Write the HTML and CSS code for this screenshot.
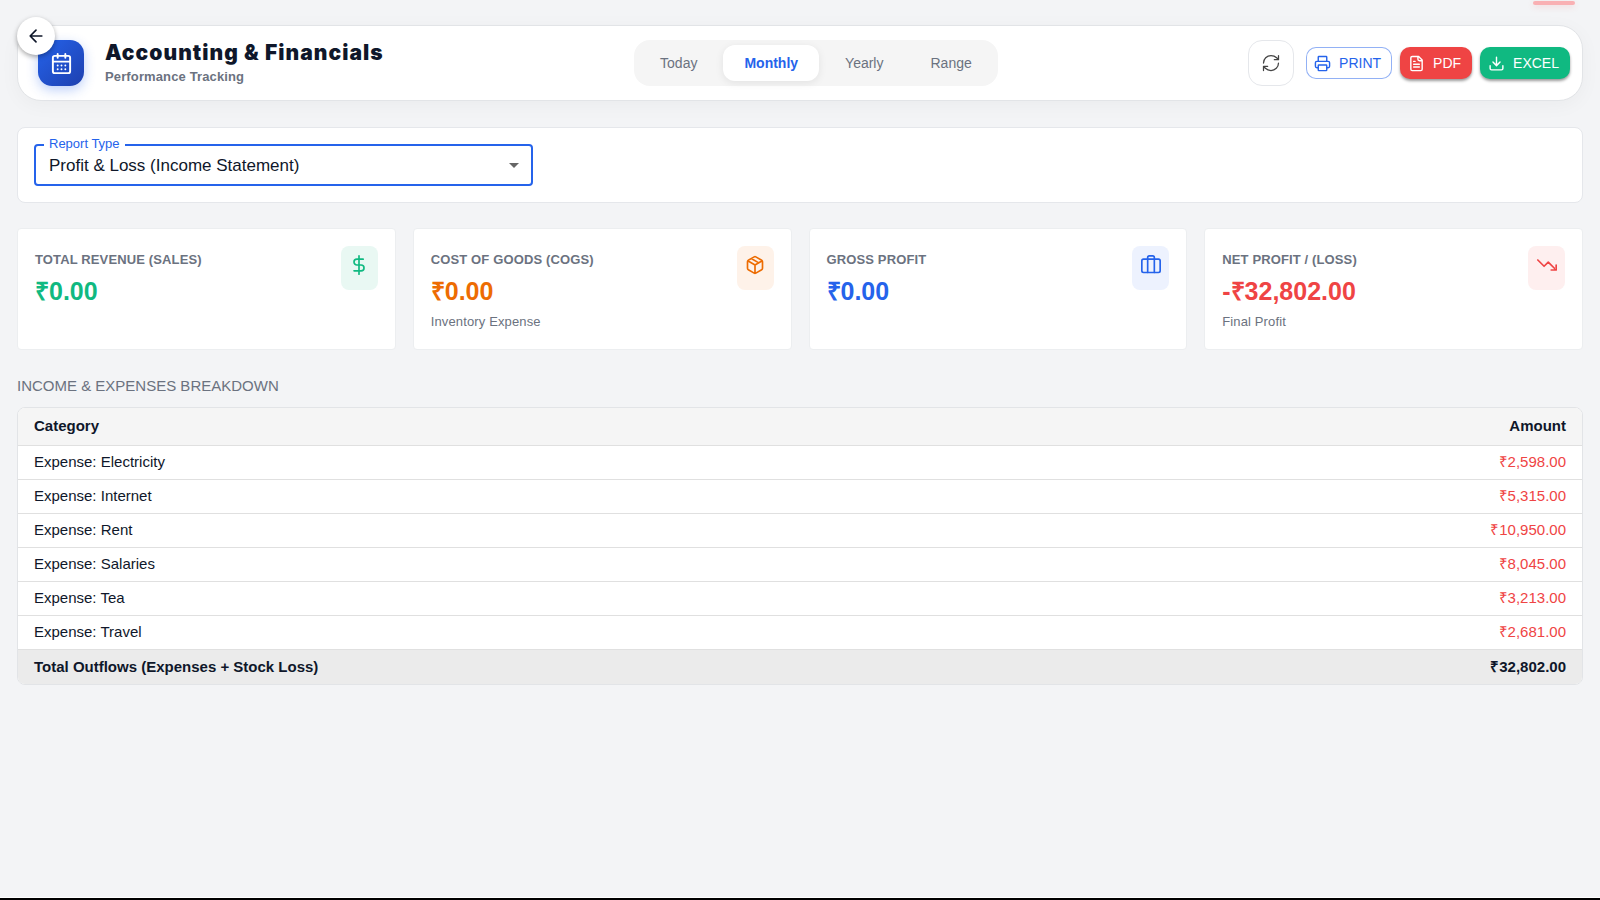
FILE: index.html
```html
<!DOCTYPE html>
<html lang="en">
  <head>
    <meta charset="UTF-8">
    <meta name="viewport" content="width=device-width, initial-scale=1">
    <title>Accounting &amp; Financials</title>
    <link rel="stylesheet" href="styles.css">
  </head>
  <body>
    <div class="toast-bar"></div>
    <button type="button" class="back" aria-label="Back">
      <svg class="icon" width="20" height="20" viewBox="0 0 24 24"><path d="M12 19l-7-7 7-7M19 12H5"/></svg>
    </button>

    <main class="page">
      <header class="header">
        <div class="brand">
          <div class="brand-icon">
            <svg class="icon" width="23" height="23" viewBox="0 0 24 24">
              <rect x="3" y="4" width="18" height="18" rx="2"/>
              <path d="M8 2v4M16 2v4M3 10h18M8 14h.01M12 14h.01M16 14h.01M8 18h.01M12 18h.01M16 18h.01"/>
            </svg>
          </div>
          <div>
            <h1 class="title">Accounting &amp; Financials</h1>
            <p class="subtitle">Performance Tracking</p>
          </div>
        </div>

        <div class="tabs">
          <button type="button" class="tab">Today</button>
          <button type="button" class="tab on">Monthly</button>
          <button type="button" class="tab">Yearly</button>
          <button type="button" class="tab">Range</button>
        </div>

        <div class="actions">
          <button type="button" class="refresh" aria-label="Refresh">
            <svg class="icon" width="20" height="20" viewBox="0 0 24 24"><path d="M3 12a9 9 0 0 1 9-9 9.75 9.75 0 0 1 6.74 2.74L21 8M21 3v5h-5M21 12a9 9 0 0 1-9 9 9.75 9.75 0 0 1-6.74-2.74L3 16M8 16H3v5"/></svg>
          </button>
          <button type="button" class="btn print">
            <svg class="icon" width="17" height="17" viewBox="0 0 24 24">
              <path d="M6 18H4a2 2 0 0 1-2-2v-5a2 2 0 0 1 2-2h16a2 2 0 0 1 2 2v5a2 2 0 0 1-2 2h-2M6 9V3a1 1 0 0 1 1-1h10a1 1 0 0 1 1 1v6"/>
              <rect x="6" y="14" width="12" height="8" rx="1"/>
            </svg>
            PRINT
          </button>
          <button type="button" class="btn pdf">
            <svg class="icon" width="17" height="17" viewBox="0 0 24 24"><path d="M15 2H6a2 2 0 0 0-2 2v16a2 2 0 0 0 2 2h12a2 2 0 0 0 2-2V7zM14 2v4a2 2 0 0 0 2 2h4M10 9H8M16 13H8M16 17H8"/></svg>
            PDF
          </button>
          <button type="button" class="btn excel">
            <svg class="icon" width="17" height="17" viewBox="0 0 24 24"><path d="M21 15v4a2 2 0 0 1-2 2H5a2 2 0 0 1-2-2v-4M7 10l5 5 5-5M12 15V3"/></svg>
            EXCEL
          </button>
        </div>
      </header>

      <section class="filters">
        <div class="field">
          <label for="report">Report Type</label>
          <select id="report">
            <option>Profit &amp; Loss (Income Statement)</option>
          </select>
        </div>
      </section>

      <section class="stats">
        <div class="card green">
          <div>
            <h2>TOTAL REVENUE (SALES)</h2>
            <p class="value">₹0.00</p>
          </div>
          <div class="card-icon">
            <svg class="icon" width="20" height="20" viewBox="0 0 24 24"><path d="M12 1v22M17 5H9.5a3.5 3.5 0 0 0 0 7h5a3.5 3.5 0 0 1 0 7H6"/></svg>
          </div>
        </div>
        <div class="card orange">
          <div>
            <h2>COST OF GOODS (COGS)</h2>
            <p class="value">₹0.00</p>
            <p class="note">Inventory Expense</p>
          </div>
          <div class="card-icon">
            <svg class="icon" width="20" height="20" viewBox="0 0 24 24"><path d="M21 16V8a2 2 0 0 0-1-1.73l-7-4a2 2 0 0 0-2 0l-7 4A2 2 0 0 0 3 8v8a2 2 0 0 0 1 1.73l7 4a2 2 0 0 0 2 0l7-4A2 2 0 0 0 21 16zM3.3 7l8.7 5 8.7-5M12 22V12M7.5 4.27l9 5.15"/></svg>
          </div>
        </div>
        <div class="card blue">
          <div>
            <h2>GROSS PROFIT</h2>
            <p class="value">₹0.00</p>
          </div>
          <div class="card-icon">
            <svg class="icon" width="20" height="20" viewBox="0 0 24 24">
              <rect x="1" y="5" width="22" height="16" rx="2"/>
              <path d="M16 21V3a2 2 0 0 0-2-2h-4a2 2 0 0 0-2 2v18"/>
            </svg>
          </div>
        </div>
        <div class="card red">
          <div>
            <h2>NET PROFIT / (LOSS)</h2>
            <p class="value">-₹32,802.00</p>
            <p class="note">Final Profit</p>
          </div>
          <div class="card-icon">
            <svg class="icon" width="20" height="20" viewBox="0 0 24 24"><path d="M23 18l-9.500-9.500-5 5L1 6M17 18h6v-6"/></svg>
          </div>
        </div>
      </section>

      <h2 class="section-title">INCOME &amp; EXPENSES BREAKDOWN</h2>
      <div class="table-wrap">
        <table>
          <thead>
            <tr><th>Category</th><th>Amount</th></tr>
          </thead>
          <tbody>
            <tr><td>Expense: Electricity</td><td>₹2,598.00</td></tr>
            <tr><td>Expense: Internet</td><td>₹5,315.00</td></tr>
            <tr><td>Expense: Rent</td><td>₹10,950.00</td></tr>
            <tr><td>Expense: Salaries</td><td>₹8,045.00</td></tr>
            <tr><td>Expense: Tea</td><td>₹3,213.00</td></tr>
            <tr><td>Expense: Travel</td><td>₹2,681.00</td></tr>
          </tbody>
          <tfoot>
            <tr><td>Total Outflows (Expenses + Stock Loss)</td><td>₹32,802.00</td></tr>
          </tfoot>
        </table>
      </div>
    </main>
    <div class="bottom-line"></div>
  </body>
</html>
```
FILE: styles.css
```css
* { margin: 0; padding: 0; box-sizing: border-box; }
body { background: #f3f4f6; color: #0f172a; font-family: "Liberation Sans", Arial, sans-serif; font-size: 14px; }
button, select { font: inherit; color: inherit; }
button { cursor: pointer; border: none; background: none; }
.icon { display: block; flex: none; fill: none; stroke: currentColor; stroke-width: 2; stroke-linecap: round; stroke-linejoin: round; }

/* floating bits */
.toast-bar { position: fixed; top: 1px; right: 25px; width: 42px; height: 4px; border-radius: 2px; background: #f9b0b3; box-shadow: 0 2px 6px rgba(239,68,68,.15); }
.back { position: absolute; top: 17px; left: 17px; z-index: 2; width: 38px; height: 38px; display: flex; align-items: center; justify-content: center; border-radius: 50%; background: #fff; box-shadow: 0 2px 5px rgba(0,0,0,.35); }
.bottom-line { position: fixed; left: 0; right: 0; bottom: 0; height: 3px; border-top: 1px solid #fff; background: #000; }

.page { padding: 25px 17px; }

/* header */
.header { display: flex; align-items: center; justify-content: space-between; padding: 14px 12px 14px 20px; border: 1px solid #e2e4e7; border-radius: 24px; background: #fff; box-shadow: 0 4px 20px rgba(0,0,0,.04); }
.brand { display: flex; align-items: center; gap: 21px; }
.brand-icon { width: 46px; height: 46px; display: flex; align-items: center; justify-content: center; border-radius: 14px; color: #fff; background: linear-gradient(135deg, #2563eb, #1e40af); box-shadow: 0 4px 12px rgba(37,99,235,.3); }
.title { font-family: Inter, "Liberation Sans", sans-serif; font-size: 21px; line-height: 26px; font-weight: 900; letter-spacing: .05em; }
.subtitle { margin-top: 2px; color: #6b7280; font-size: 13px; line-height: 18px; font-weight: bold; letter-spacing: .01em; }
.tabs { display: flex; gap: 5px; padding: 5px; border-radius: 16px; background: #f5f5f5; }
.tab { height: 36px; padding: 0 21px; border-radius: 12px; color: #6b7280; }
.tab.on { color: #2563eb; font-weight: bold; background: #fff; box-shadow: 0 2px 8px rgba(0,0,0,.08); }
.actions { display: flex; align-items: center; gap: 8px; }
.refresh { width: 46px; height: 46px; margin-right: 4px; display: flex; align-items: center; justify-content: center; border: 1px solid #e5e7eb; border-radius: 14px; color: #444; }
.refresh .icon { stroke-width: 1.5; }
.btn { height: 32px; padding: 0 11px 0 8px; display: flex; align-items: center; gap: 8px; border-radius: 10px; color: #fff; }
.print { color: #2563eb; box-shadow: inset 0 0 0 1px #92b1f5; }
.pdf { background: #ef4444; box-shadow: 0 2px 3px rgba(0,0,0,.4); }
.excel { background: #10b981; box-shadow: 0 2px 3px rgba(0,0,0,.4); }

/* report select */
.filters { display: grid; grid-template-columns: repeat(3, 1fr); gap: 17px; margin-top: 26px; padding: 16px; border: 1px solid #e5e7eb; border-radius: 8px; background: #fff; }
.field { position: relative; }
.field label { position: absolute; top: -8px; left: 10px; padding: 0 5px; background: #fff; color: #2563eb; font-size: 13px; line-height: 16px; }
.field select { display: block; width: 100%; height: 42px; padding: 0 32px 0 13px; border: 2px solid #2563eb; border-radius: 4px; background: #fff; font-size: 17px; appearance: none; outline: none; }
.field::after { content: ""; position: absolute; top: 19px; right: 14px; border: 5px solid transparent; border-top-color: #666; border-bottom: none; pointer-events: none; }

/* stat cards */
.stats { display: grid; grid-template-columns: repeat(4, 1fr); gap: 17px; margin-top: 25px; }
.card { display: flex; justify-content: space-between; align-items: flex-start; min-height: 122px; padding: 17px; border: 1px solid #eceef0; border-radius: 4px; background: #fff; }
.card h2 { margin-top: 4px; color: #6b7280; font-size: 13px; line-height: 20px; letter-spacing: .01em; }
.value { margin-top: 5px; font-size: 25px; line-height: 32px; font-weight: bold; }
.note { margin-top: 5px; color: #6b7280; font-size: 13px; line-height: 20px; letter-spacing: .01em; }
.card-icon { width: 37px; height: 44px; padding-top: 9px; display: flex; justify-content: center; border-radius: 8px; }
.green .value, .green .card-icon { color: #10b981; }
.green .card-icon { background: #e9f8f3; }
.orange .value, .orange .card-icon { color: #ed6c02; }
.orange .card-icon { background: #fef2e9; }
.blue .value, .blue .card-icon { color: #2563eb; }
.blue .card-icon { background: #edf2fe; }
.red .value, .red .card-icon { color: #ef4444; }
.red .card-icon { background: #feefef; }

/* breakdown */
.section-title { margin: 24px 0 9px; color: #6b7280; font-size: 15px; line-height: 24px; font-weight: normal; }
.table-wrap { border: 1px solid #e2e4e7; border-radius: 8px; background: #fff; overflow: hidden; }
table { width: 100%; border-collapse: collapse; font-size: 15px; line-height: 20px; }
th, td { height: 34px; padding: 0 16px; border-bottom: 1px solid #e0e0e0; text-align: left; }
th { height: 37px; background: #f5f5f5; }
th:last-child, td:last-child { text-align: right; }
tbody td:last-child { color: #ef4444; }
tfoot td { height: 35px; border-bottom: none; background: #ebebeb; font-weight: bold; }
```
